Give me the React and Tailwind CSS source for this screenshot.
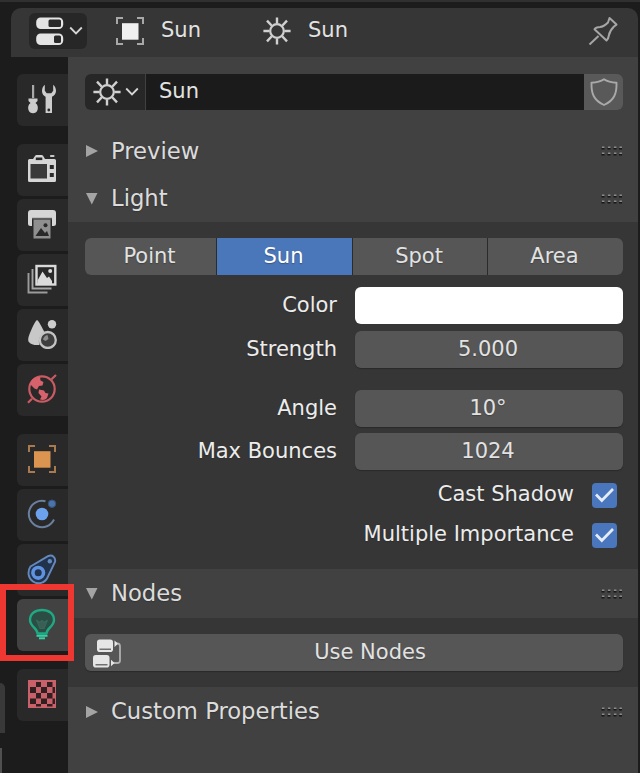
import React from "react";

const ToggleIcon = () => (
  <svg width="30" height="30" viewBox="0 0 30 30">
    <rect x="1.2" y="1.5" width="27" height="11.5" rx="4.5" fill="#e4e4e4" />
    <rect x="13.5" y="3.5" width="12.5" height="7.5" rx="1.5" fill="#2a2a2a" />
    <rect x="1.2" y="17.5" width="27" height="11.5" rx="4.5" fill="#e4e4e4" />
    <rect x="19" y="19.5" width="7" height="7.5" rx="1.5" fill="#2a2a2a" />
  </svg>
);

const Chevron = () => (
  <svg width="14" height="10" viewBox="0 0 14 10" fill="none">
    <path d="M1.2 1.5 L7 7.5 L12.8 1.5" stroke="#d6d6d6" strokeWidth="1.8" />
  </svg>
);

const ObjectIcon = ({ fill, stroke }) => (
  <svg width="30" height="30" viewBox="0 0 30 30" fill="none">
    <rect x="7" y="7.2" width="16.5" height="16.5" fill={fill} />
    <path
      d="M2 8V2H8M22 2H28V8M28 22V28H22M8 28H2V22"
      stroke={stroke}
      strokeWidth="2"
    />
  </svg>
);

const SunIcon = () => (
  <svg width="30" height="30" viewBox="0 0 30 30" fill="none" stroke="#d0d0d0">
    <circle cx="15" cy="15" r="6.8" strokeWidth="2.2" />
    <path
      d="M15 7.5V1.4M15 22.5V28.6M7.5 15H1.4M22.5 15H28.6M9.8 9.8L5 4.6M20.2 9.8L25 4.6M9.8 20.2L5 25.4M20.2 20.2L25 25.4"
      strokeWidth="2.4"
    />
  </svg>
);

const PinIcon = () => (
  <svg width="30" height="30" viewBox="0 0 30 30" fill="none" stroke="#a6a6a6">
    <path
      d="M21.500 2L28.500 8.600L26 10.500C23 13.500 21.500 16 21 19C20.700 21 20 23 18.500 24.500L6.500 13.200C7.500 11.600 9.500 11 12 11C15 10.800 17.500 9 20 6.500Z"
      strokeWidth="2"
      strokeLinejoin="round"
    />
    <path d="M10.500 20L1.500 28.500" strokeWidth="2" />
  </svg>
);

const ShieldIcon = () => (
  <svg width="28" height="28" viewBox="0 0 28 28" fill="none">
    <path
      d="M14 1.3 C10.5 3.8 6 4.6 1.5 4.7 C1.2 15 3.5 22.5 14 27 C24.5 22.5 26.8 15 26.5 4.7 C22 4.6 17.5 3.8 14 1.3Z"
      stroke="#a9a9a9"
      strokeWidth="1.9"
      strokeLinejoin="round"
    />
  </svg>
);

const ToolIcon = () => (
  <svg width="30" height="30" viewBox="0 0 30 30" fill="#cdcdcd">
    <path d="M5 1h2.200v13H5z" fill="#a8a8a8" />
    <path d="M1.500 14.500h9v2.500L8.500 19c2.600 2 2.700 4.700 2 7C9.800 28.500 8 29.200 6 29.200s-3.800-.700-4.500-3.200c-.700-2.300-.600-5 2-7L1.500 17z" />
    <path d="M17.800.800C16 2.200 15 4.600 15 7c0 2.700 1.300 4.500 3.600 5.800V29h6.400V12.800c2.300-1.300 4-3.100 4-5.800 0-2.400-1-4.800-2.800-6.200v6l-1.900 2.400h-4.600L17.800 6.800z" />
    <circle cx="21.800" cy="26" r="1.400" fill="#2a2a2a" />
  </svg>
);

const RenderIcon = () => (
  <svg width="30" height="30" viewBox="0 0 30 30">
    <path
      d="M1 6.500Q1 5 2.500 5H6L8 2Q8.600 1 9.600 1H14.600Q15.600 1 16.200 2L18 5H27.500Q29 5 29 6.500V26.500Q29 28 27.500 28H2.500Q1 28 1 26.500Z"
      fill="#d6d6d6"
    />
    <rect x="3.500" y="10" width="16.500" height="14.500" fill="#3a3a3a" />
    <rect x="8.800" y="3.500" width="6.500" height="2.600" fill="#2a2a2a" />
    <rect x="22.800" y="11" width="4" height="4" fill="#2a2a2a" />
    <rect x="22.800" y="19" width="4" height="4" fill="#2a2a2a" />
    <rect x="23" y="1" width="4.500" height="2" rx=".8" fill="#c8c8c8" />
  </svg>
);

const OutputIcon = () => (
  <svg width="30" height="30" viewBox="0 0 30 30">
    <path
      d="M4 1H26Q29 1 29 4V14.500Q29 17 26.500 17H25V10H5V17H3.500Q1 17 1 14.500V4Q1 1 4 1Z"
      fill="#d6d6d6"
    />
    <rect x="6.500" y="10.500" width="17" height="19" fill="#8f8f8f" />
    <rect x="5" y="8.800" width="20" height="1.600" fill="#5e5e5e" />
    <path d="M8.500 27L14 19L18 24L20 22L22 27Z" fill="#292929" />
    <circle cx="18.500" cy="16.200" r="2" fill="#292929" />
  </svg>
);

const ViewLayerIcon = () => (
  <svg width="30" height="30" viewBox="0 0 30 30" fill="none">
    <path d="M1.500 9V28.500H20.500" stroke="#9b9b9b" strokeWidth="1.900" />
    <path d="M5.500 5V24.500H24.500" stroke="#a6a6a6" strokeWidth="1.900" />
    <rect x="9.500" y="2" width="18.800" height="18.500" stroke="#dadada" strokeWidth="2.400" />
    <path d="M10.500 20V16.500L15.500 7.500L20 14L22 12.500L25 17V20Z" fill="#dadada" />
    <circle cx="23.200" cy="7" r="2" fill="#dadada" />
  </svg>
);

const SceneIcon = () => (
  <svg width="30" height="30" viewBox="0 0 30 30">
    <path
      d="M10 1C11.500 1.500 15.500 9 18 14.500C13 16 10.800 20 12.500 26C8 26.500 3.500 25.500 1.500 22.500C.800 20.500 1.500 18 2.200 16C4.500 10.500 8 2 10 1Z"
      fill="#c8c8c8"
    />
    <circle cx="25" cy="5.200" r="4.200" fill="#cdcdcd" />
    <circle cx="20.800" cy="21" r="8" fill="#3e3e3e" stroke="#c3c3c3" strokeWidth="2.300" />
    <path d="M16 20.500Q17 16.800 20.500 16L21.500 20L18.500 22Z" fill="#8c8c8c" />
  </svg>
);

const WorldIcon = () => (
  <svg width="30" height="30" viewBox="0 0 30 30" fill="none">
    <circle cx="15" cy="15" r="12.700" stroke="#c95b64" strokeWidth="2.200" />
    <path d="M1 28.800L5 24.800M24.500 5.200L29 1" stroke="#c95b64" strokeWidth="2.200" />
    <path
      d="M4 7.500C6 3.500 10 2.500 13 3L13.500 6.500L16.500 8L15.500 11.500L12 12L10 15.500L7.500 14.500L3 10ZM12 15.500L17 16.500L18.500 19L21.500 19.500L20 24C18.500 26 16 26.500 13 25.500L14.500 22.500L11.500 19Z"
      fill="#d8626b"
    />
  </svg>
);

const PhysicsIcon = () => (
  <svg width="30" height="30" viewBox="0 0 30 30" fill="none">
    <path
      d="M18.500 2.200A13.200 13.200 0 1 0 27 20.500"
      stroke="#6b7f9f"
      strokeWidth="2"
    />
    <circle cx="15" cy="15" r="6.300" fill="#6ca2ec" />
    <circle cx="25" cy="4.700" r="3.700" fill="#4b74ac" stroke="#36547f" strokeWidth="1" />
  </svg>
);

const ConstraintIcon = () => (
  <svg width="30" height="30" viewBox="0 0 30 30" fill="none">
    <path
      d="M3.500 12.500L21 2.200C25.500.200 29 3.500 28 8L20.500 23.500C18 29 11 31 6 27.500C1 24 .200 17.500 3.500 12.500Z"
      fill="#20324c"
      stroke="#6589bc"
      strokeWidth="1.900"
    />
    <circle cx="11.200" cy="18.800" r="5.300" stroke="#6093df" strokeWidth="3.600" />
    <circle cx="22.800" cy="7.200" r="2.200" fill="#6589bc" />
  </svg>
);

const LightDataIcon = () => (
  <svg width="30" height="32" viewBox="0 0 30 32" fill="none" stroke="#20a883">
    <path
      d="M10.500 25.500C10.500 20.500 3 18.500 3 12C3 5.500 8.500 2 15 2S27 5.500 27 12C27 18.500 19.500 20.500 19.500 25.500Z"
      fill="#2b4d44"
      strokeWidth="2.400"
      strokeLinejoin="round"
    />
    <path d="M9.500 12L13 20.500H17L20.500 12L17.500 14.500L15 12.500L12.500 14.500Z" fill="#3c5d54" stroke="#33695b" strokeWidth="1.200" />
    <path d="M9.500 27.800H20.500" stroke="#35d0a5" strokeWidth="2" />
    <path d="M12 30.300H18" stroke="#35d0a5" strokeWidth="2" />
  </svg>
);

const TextureIcon = () => (
  <svg width="30" height="30" viewBox="0 0 30 30">
    <rect x="1" y="1" width="28" height="28" fill="#c9616a" />
    <path
      d="M9 3h5v5H9zM20 3h5.500v5H20zM3 8h6v6H3zM14 8h6v6h-6zM25.500 8H28v6h-2.500zM9 14h5v5.500H9zM20 14h5.500v5.500H20zM3 19.500h6V25H3zM14 19.500h6V25h-6zM25.500 19.500H28V25h-2.500zM9 25h5v2.500H9zM20 25h5.500v2.500H20z"
      fill="#301f21"
    />
  </svg>
);

const NodesIcon = () => (
  <svg width="30" height="30" viewBox="0 0 30 30" fill="none">
    <rect x="5" y="1.500" width="16" height="12.500" rx="2.800" fill="#e6e6e6" />
    <rect x="1" y="17" width="16.500" height="12.500" rx="2.800" fill="#e6e6e6" />
    <path d="M7.500 11.200H19M3.500 26.800H15.500" stroke="#707070" strokeWidth="1.400" />
    <path d="M24 5.500H25.500Q28 5.500 28 8.500V22.500Q28 25 25.500 25H21" stroke="#b0b0b0" strokeWidth="1.800" />
    <path d="M22.500 2.500V9L26 5.800ZM19 21.800V28.200L22.500 25Z" fill="#e6e6e6" />
  </svg>
);

const Grip = () => (
  <svg width="22" height="10" viewBox="0 0 22 10">
    {[1, 7, 13, 18.5].map((x) => (
      <g key={x}>
        <path d={`M${x - 0.5} 2h3v1.500h-3zM${x - 0.5} 8h3v1.500h-3z`} fill="#171717" />
        <path d={`M${x} 0.500h2.400v1.500h-2.400zM${x} 6.500h2.400v1.500h-2.400z`} fill="#8c8c8c" />
      </g>
    ))}
  </svg>
);

const tabGroups = [
  [ToolIcon],
  [RenderIcon, OutputIcon, ViewLayerIcon, SceneIcon, WorldIcon],
  [
    () => <ObjectIcon fill="#dc9550" stroke="#a97a50" />,
    PhysicsIcon,
    ConstraintIcon,
    LightDataIcon,
  ],
  [TextureIcon],
];

const lightTypes = [
  { name: "Point", width: "w-[131px]" },
  { name: "Sun", width: "w-[135px]" },
  { name: "Spot", width: "w-[134px]" },
  { name: "Area", width: "flex-1" },
];

const PanelHeader = ({ title, open, className }) => (
  <div className={`flex items-center pl-[17px] pr-[15px] ${className}`}>
    <svg width="14" height="14" viewBox="0 0 14 14" fill="#a4a4a4">
      {open ? <path d="M1 1H12.500L6.800 12.500Z" /> : <path d="M1 1V13L13 7Z" />}
    </svg>
    <h2 className="ml-3 flex-1 text-[22.700px] text-[#dcdcdc]">{title}</h2>
    <Grip />
  </div>
);

const Field = ({ label, value, className = "" }) => (
  <div className={`flex h-[37px] items-center ${className}`}>
    <span className="flex-1 pr-[18px] text-right text-[#ececec]">{label}</span>
    <div className="flex h-full w-[268px] items-center justify-center rounded-md bg-[#565656] pr-0.5 shadow-[0_1px_1px_#2a2a2a]">
      {value}
    </div>
  </div>
);

const CheckRow = ({ label }) => (
  <div className="flex h-[25px] items-center justify-end pr-1.5">
    <span className="pr-[18px] pb-0.5 text-[#ececec]">{label}</span>
    <div className="flex size-[25px] items-center justify-center rounded bg-[#4a76bd]">
      <svg width="21" height="19" viewBox="0 0 21 19" fill="none">
        <path d="M2 8.500L7.800 14.500L19 3" stroke="#e4ecf8" strokeWidth="2.700" />
      </svg>
    </div>
  </div>
);

const App = () => {
  return (
    <div className="relative h-[773px] w-[640px] overflow-hidden bg-[#1c1c1c] font-['DejaVu_Sans',sans-serif] text-[21px] leading-none text-[#e2e2e2] [text-shadow:0_1px_1px_#2226]">
      <div className="h-0.5 bg-[#303030]" />
      <header className="mt-[6px] ml-[11px] flex h-[49px] w-[627px] items-center rounded-t-[10px] bg-[#363636] pr-5 pb-[3px] pl-[18px]">
        <div className="flex h-[36px] w-[58px] items-center justify-between rounded-md bg-[#272727] pr-1 pl-1.5">
          <ToggleIcon />
          <Chevron />
        </div>
        <div className="ml-[28px]">
          <ObjectIcon fill="#f0f0f0" stroke="#a8a8a8" />
        </div>
        <span className="ml-4 w-[101px] pb-0.5">Sun</span>
        <SunIcon />
        <span className="ml-4 flex-1 pb-0.5">Sun</span>
        <PinIcon />
      </header>

      <div className="flex h-[716px]">
        <nav className="flex w-[68px] flex-col gap-[18px] pt-[17px] pl-[17px]">
          {tabGroups.map((group, i) => (
            <div key={i} className="flex flex-col gap-[3px]">
              {group.map((Icon, j) => (
                <div
                  key={j}
                  className={`flex h-[52px] w-[51px] items-center justify-center rounded-l-md pr-px pb-0.5 ${
                    Icon === LightDataIcon ? "bg-[#424242]" : "bg-[#292929]"
                  }`}
                >
                  <Icon />
                </div>
              ))}
            </div>
          ))}
        </nav>

        <main className="w-[570px] bg-[#414141]">
          <div className="flex h-[70px] pt-[17px] pr-[15px] pl-[17px]">
            <div className="flex h-[36px] w-[60px] items-center gap-[3px] rounded-l-md bg-[#272727] pl-[7px]">
              <SunIcon />
              <Chevron />
            </div>
            <div className="ml-px flex h-[36px] flex-1 items-center bg-[#1b1b1b] pb-0.5 pl-[13px]">
              Sun
            </div>
            <div className="flex h-[36px] w-[39px] items-center justify-center rounded-r-md bg-[#595959]">
              <ShieldIcon />
            </div>
          </div>

          <PanelHeader title="Preview" className="h-[48px]" />
          <PanelHeader title="Light" open className="h-[47px]" />
          <section className="h-[347px] bg-[#363636] pt-[16px] pr-[15px] pl-[17px]">
            <div className="flex h-[37px] gap-px overflow-hidden rounded-md bg-[#2b2b2b]">
              {lightTypes.map(({ name, width }) => (
                <div
                  key={name}
                  className={`flex items-center justify-center pr-0.5 ${width} ${
                    name === "Sun" ? "bg-[#4a76ba] text-white" : "bg-[#565656]"
                  }`}
                >
                  {name}
                </div>
              ))}
            </div>
            <div className="mt-3 flex h-[37px] items-center">
              <span className="flex-1 pr-[18px] text-right text-[#ececec]">Color</span>
              <div className="h-full w-[268px] rounded-md bg-white" />
            </div>
            <Field label="Strength" value="5.000" className="mt-[7px]" />
            <Field label="Angle" value="10°" className="mt-[22px]" />
            <Field label="Max Bounces" value="1024" className="mt-[6px]" />
            <div className="mt-[13px] flex flex-col gap-[15px]">
              <CheckRow label="Cast Shadow" />
              <CheckRow label="Multiple Importance" />
            </div>
          </section>

          <PanelHeader title="Nodes" open className="h-[49px]" />
          <section className="h-[69px] bg-[#363636] pt-[16px] pr-[15px] pl-[17px]">
            <div className="flex h-[37px] items-center rounded-md bg-[#565656] pl-[7px] shadow-[0_1px_1px_#2a2a2a]">
              <NodesIcon />
              <span className="flex-1 pr-[5px] text-center">Use Nodes</span>
            </div>
          </section>
          <PanelHeader title="Custom Properties" className="h-[49px]" />
        </main>
      </div>

      {/* Neighbouring editor edge */}
      <div className="absolute top-[683px] left-0 h-[50px] w-[5px] rounded-tr-md bg-[#393939]" />
      <div className="absolute top-[748px] left-0 h-[25px] w-0.5 bg-[#505050]" />

      {/* Highlight around the light data tab */}
      <div className="absolute top-[584px] left-0 h-[77px] w-[74px] border-6 border-[#ee3730]" />
    </div>
  );
};

export default App;
